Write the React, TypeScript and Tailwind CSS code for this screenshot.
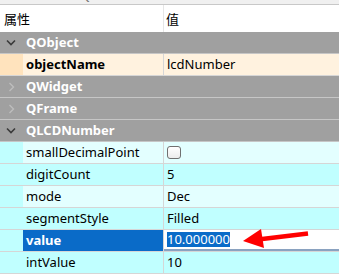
import React from 'react';

const font = "font-['Noto_Sans','Noto_Sans_CJK_SC',sans-serif]";

function Chevron({ open }: { open: boolean }) {
  return open ? (
    <svg width="10" height="7" viewBox="0 0 10 7" className="ml-[6px]">
      <path d="M1 1.5 L5 5.5 L9 1.5" fill="none" stroke="#3a3a3a" strokeWidth="1.6" />
    </svg>
  ) : (
    <svg width="7" height="10" viewBox="0 0 7 10" className="ml-[8px]">
      <path d="M1.5 1 L5.5 5 L1.5 9" fill="none" stroke="#bdbdbd" strokeWidth="1.4" />
    </svg>
  );
}

function Group({ name, open }: { name: string; open: boolean }) {
  return (
    <div className="h-[22px] flex items-center bg-[#a0a0a0] border-b border-[#c6c6c6]">
      <div className="w-[26px] flex items-center">
        <Chevron open={open} />
      </div>
      <span className="text-white font-bold leading-none">{name}</span>
    </div>
  );
}

function Prop({ name, value, light, dark, alt, bold }: any) {
  const bg = alt ? dark : light;
  return (
    <div className="h-[22px] flex border-b border-[#d6d6d6]">
      <div className="w-[23px] shrink-0" style={{ background: dark }} />
      <div
        className={`w-[141px] shrink-0 flex items-center pl-[3px] border-r border-[#d6d6d6] text-black ${bold ? 'font-bold' : ''}`}
        style={{ background: bg }}
      >
        {name}
      </div>
      <div className="flex-1 flex items-center pl-[3px] text-black" style={{ background: bg }}>
        {value}
      </div>
    </div>
  );
}

export default function App() {
  const cream = { light: '#fff2df', dark: '#ffe3bd' };
  const cyan = { light: '#e3ffff', dark: '#c0ffff' };

  return (
    <div className={`w-[349px] h-[276px] bg-white overflow-hidden relative text-[13px] ${font}`}>
      <div className="w-[339px]">
        {/* top strip, cut off */}
        <div className="h-[4px] bg-[#f0f0f0] overflow-hidden">
          <div className="-mt-[14px] pl-[2px] text-[#707070] whitespace-nowrap">lcdNumber : QLCDNumber</div>
        </div>
        <div className="h-px bg-[#c8c8c8]" />

        {/* header */}
        <div className="h-[27px] flex bg-white">
          <div className="w-[164px] flex items-center pl-[4px] pt-[2px] border-r border-[#e6e6e6] text-black">属性</div>
          <div className="flex-1 flex items-center pl-[2px] pt-[2px] text-black">值</div>
        </div>

        <Group name="QObject" open />
        <Prop name="objectName" value="lcdNumber" bold {...cream} />
        <Group name="QWidget" open={false} />
        <Group name="QFrame" open={false} />
        <Group name="QLCDNumber" open />
        <Prop
          name="smallDecimalPoint"
          value={
            <div className="w-[14px] h-[13px] rounded-[3px] border border-[#707070] bg-gradient-to-b from-white to-[#ececec]" />
          }
          {...cyan}
        />
        <Prop name="digitCount" value="5" alt {...cyan} />
        <Prop name="mode" value="Dec" {...cyan} />
        <Prop name="segmentStyle" value="Filled" alt {...cyan} />

        {/* selected row with editor */}
        <div className="h-[22px] flex border-b border-[#d6d6d6]">
          <div className="w-[23px] shrink-0 bg-[#c0ffff]" />
          <div className="w-[141px] shrink-0 flex items-center pl-[3px] bg-[#0a6bc8] text-white font-bold border-r border-[#d6d6d6]">
            value
          </div>
          <div className="flex-1 flex items-center pl-[3px] bg-white border-b-2 border-[#8aa2c0]">
            <span className="bg-[#0a6bc8] text-white leading-[15px]">10.000000</span>
          </div>
        </div>

        <Prop name="intValue" value="10" alt {...cyan} />
      </div>

      {/* annotation arrow */}
      <svg className="absolute left-0 top-0" width="349" height="276" viewBox="0 0 349 276">
        <line x1="308" y1="233.5" x2="258" y2="239.5" stroke="#ff0000" strokeWidth="4.5" />
        <polygon points="243,241 261,229 264,248" fill="#ff0000" />
      </svg>
    </div>
  );
}
